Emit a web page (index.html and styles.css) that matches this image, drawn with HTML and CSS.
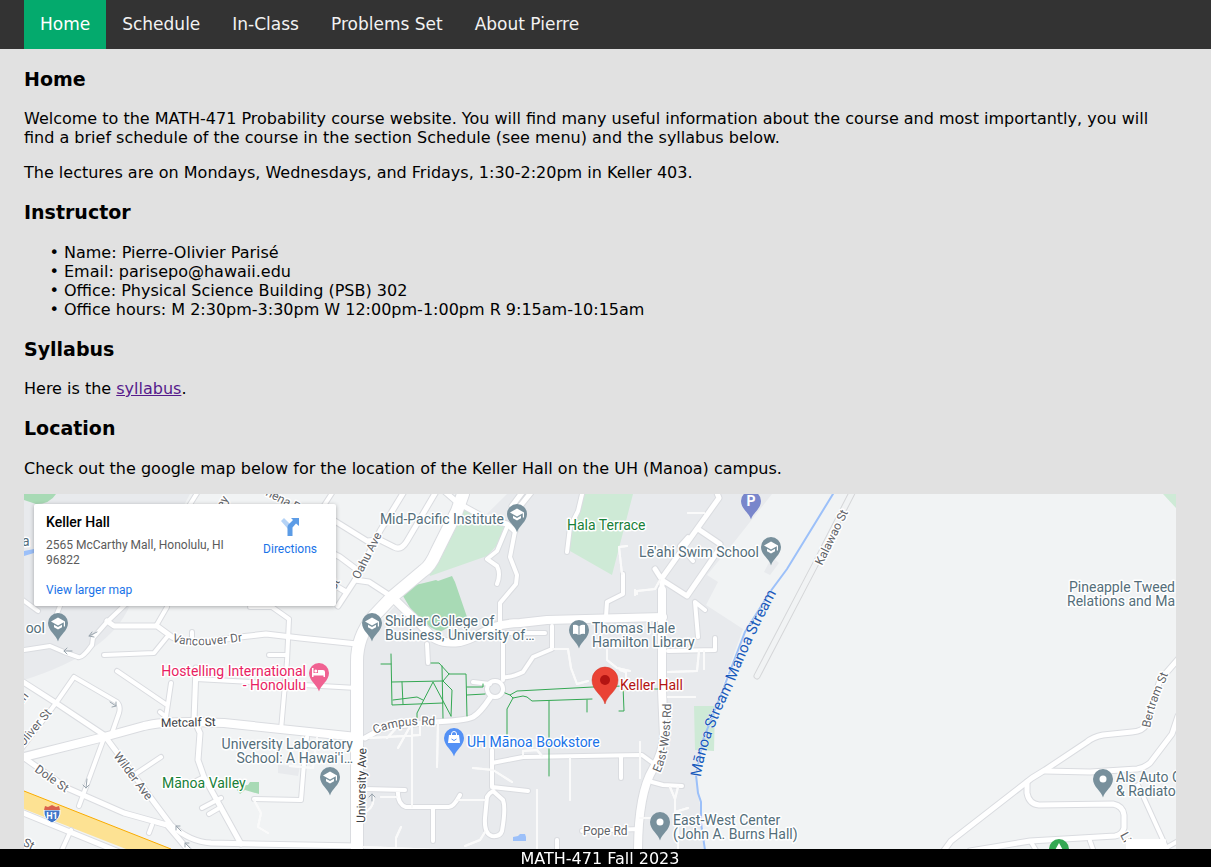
FILE: index.html
```html
<!DOCTYPE html>
<html lang="en">
<head>
<meta charset="utf-8">
<title>MATH-471 Probability</title>
<link rel="stylesheet" href="styles.css">
</head>
<body>
<nav class="menu">
  <a class="active" href="#home">Home</a>
  <a href="#schedule">Schedule</a>
  <a href="#inclass">In-Class</a>
  <a href="#problems">Problems Set</a>
  <a href="#about">About Pierre</a>
</nav>
<main class="page">
  <article class="text">
    <h3>Home</h3>
    <p>Welcome to the MATH-471 Probability course website. You will find many useful information about the course and most importantly, you will find a brief schedule of the course in the section Schedule (see menu) and the syllabus below.</p>
    <p>The lectures are on Mondays, Wednesdays, and Fridays, 1:30-2:20pm in Keller 403.</p>
    <h3>Instructor</h3>
    <ul>
      <li>Name: Pierre-Olivier Parisé</li>
      <li>Email: parisepo@hawaii.edu</li>
      <li>Office: Physical Science Building (PSB) 302</li>
      <li>Office hours: M 2:30pm-3:30pm W 12:00pm-1:00pm R 9:15am-10:15am</li>
    </ul>
    <h3>Syllabus</h3>
    <p>Here is the <a class="visited" href="#syllabus">syllabus</a>.</p>
    <h3>Location</h3>
    <p class="lead">Check out the google map below for the location of the Keller Hall on the UH (Manoa) campus.</p>
  </article>
  <section class="map" aria-label="Map of Keller Hall">
    <svg class="canvas" viewBox="24 494 1152 355" preserveAspectRatio="xMinYMin slice">
      <defs>
        <path id="pin" d="M0 18.500C-1.500 12-10 8-10 0A10 10 0 1 1 10 0C10 8 1.500 12 0 18.500Z"/>
        <g id="cap"><path fill="#fff" d="M-7-1.500L0-5.500 7-1.500V3.500H5.800V-.8L0 2.500Z"/><path fill="#fff" d="M-4 1.700L0 4 4 1.700V4.200L0 6.500-4 4.200Z"/></g>
        <g id="roads">
          <g class="w11"><path d="M463 494L457 511 437 551Q430 567 423 571L392 597 373 617Q357 637 357 661V852"/></g>
          <g class="w8">
            <path d="M392 597L428 632Q436 645 460 642C485 636 484 624 520 623L547 620 663 617"/>
            <path d="M662 590V690L664 737Q662 755 653 769 638 794 638 852"/>
            <path d="M20 758L104 737 144 726Q160 722 190 722L224 723 357 737"/>
          </g>
          <g class="w5">
            <path d="M443 490L458 503 487 519 507 524 515 531"/>
            <path d="M405 490L380 531 357 577 338 606"/>
            <path d="M437 490L407 541Q401 551 394 547L380 540 367 541 330 518"/>
            <path d="M320 547L340 557 360 572M336 586L346 592M355 580L369 582 392 597"/>
            <path d="M533 490L517 510M524 490L512 506"/>
            <path d="M490 698Q480 713 473 717 464 721 430 722L383 728 365 738"/>
            <path d="M715 488L719 498 662 578V600M655 569L662 580 687 596 720 548M698 529L720 544"/>
            <path d="M107 621L114 626 157 626 172 637Q188 645 204 642L240 637 266 634 300 638 357 644"/>
            <path d="M196 668L194 720 200 733 198 760 204 777 241 844"/>
            <path d="M20 680L56 703 104 735 171 825Q190 842 211 843L357 846"/>
            <path d="M20 755L67 788 124 813 167 825 190 852"/>
            <path d="M16 810L124 854"/>
            <path d="M1180 657L1160 680 1146 725Q1143 731 1132 732L1103 735Q1093 737 1087 742L1045 770 1032 778 951 841 940 856"/>
            <path d="M1045 771L1090 772 1137 769Q1144 768 1150 763L1172 734 1178 716"/>
            <path d="M1027 782V793Q1029 804 1039 805L1113 804Q1123 806 1124 815V828Q1122 835 1115 836L1030 841 970 851"/>
          </g>
          <g class="w4">
            <path d="M495 681a8 8 0 1 0 .1 0"/>
            <path d="M507 633H545M515 531L510 557 517 575 516 584 500 603V622M507 527L497 551 487 559 497 566Q501 574 497 584"/>
            <path d="M552 626V649L533 657 523 672Q510 678 503 677M503 640V680M473 682L490 684M427 644L428 663"/>
            <path d="M492 750V787L528 791M492 763L523 757 642 755 653 763M493 791L503 800Q506 808 502 831 500 837 492 836 484 834 485 818L487 797Q489 793 493 791"/>
            <path d="M365 789L405 790M398 790Q397 804 406 807L448 807Q453 808 460 795M433 807V841M621 756V778M557 840V852M582 831L640 829"/>
            <path d="M688 537L680 546 693 561M695 602L698 637M695 602L705 610M715 638V650L668 651M652 782L663 785 682 786"/>
            <path d="M130 600L107 622 93 638 92 645Q82 659 78 657L64 652 50 646 24 650M167 607L156 626M167 637L154 653 104 655M192 632V641"/>
            <path d="M250 607H272L289 619 287 661 281 730M269 655H286M117 671L167 705M171 683L166 717 160 712M196 679L357 688"/>
            <path d="M74 677L56 703 22 748M74 677L117 702Q121 706 119 713L112 733M104 738L79 806M161 757L137 773M149 833L152 825M71 830L61 852"/>
            <path d="M221 798L202 808M221 807L209 814M204 777L194 782M254 799L301 800 304 763 307 737"/>
            <path d="M199 490L189 506M334 490L323 507M20 598L38 611M60 606L56 616M1138 785L1163 840 1168 852M1031 842L1037 852M1090 841L1094 852M1164 849L1180 840M583 490L578 511 570 527 567 552"/>
            <path d="M623 574V594L607 602 606 617"/>
          </g>
          <g class="w2">
            <path d="M627 546L619 547 622 574M553 649H568L571 668 577 684M607 650V660L617 668 630 671M457 800H485M373 797Q375 807 364 813"/>
            <path d="M412 725V807M438 722L437 767M370 738L420 735V722M412 723L398 748M398 726L387 738M473 768L493 770 512 782M523 756V751L537 750 542 756"/>
            <path d="M537 790V852M570 758V800M401 827L396 838V852M485 832L480 840 465 846M363 847L440 850M688 513H704M660 580L655 589 637 591V594"/>
            <path d="M699 651L697 671 668 672M704 651V669M668 697H695M670 787L675 799V812L688 808M678 787L675 799M678 812V852M640 818H652M254 800L261 813 258 827 268 833M317 738L313 768 290 766"/>
            <path d="M381 797H397M577 684L588 681M635 590V595M620 670L626 672V684M640 742V778"/>
          </g>
        </g>
        <path id="vancouver" d="M172 641Q190 650 250 640"/>
        <path id="campus" d="M375 734Q400 722 445 726"/>
        <path id="eastwest" d="M660 773Q671 750 671 702V680"/>
        <path id="stream" d="M701 777Q706 738 734 684 748 645 779 588L785 577"/>
        <path id="bertram" d="M1150 728Q1154 705 1166 680L1172 664"/>
      </defs>
      <rect class="land" x="24" y="494" width="1152" height="355"/>
      <path class="campus" d="M507 494H772L735 541 707 575 718 582 706 605 743 629 723 684 696 765 704 849H357V650L400 600Z"/>
      <path class="campus" d="M24 494H190L130 605Q110 653 24 680ZM764 572L772 557 779 563 770 575ZM278 765L300 766 298 776 278 773Z"/>
      <path class="green" d="M460 506L505 526 499 543 487 556 430 576 427 567 440 545ZM585 494H633L612 575 570 551V537ZM694 706H715L714 751 695 750ZM1163 494H1176V508Z"/>
      <path class="park" d="M403 596Q410 585 424 583L436 580 438 581 452 576 455 582 467 617 440 632 430 627 412 611ZM24 494H56Q50 504 36 504L24 500ZM234 786L240 794 245 790 259 794V782H250L248 785Z"/>
      <path class="water" d="M24 551L34 549V553L24 556ZM513 837L518 836 520 834 525 834 526 837V841H513Z"/>
      <path class="highway" d="M24 791L171 849H126L24 809Z"/>
      <path class="edge" d="M24 791L171 849"/>
      <use class="casing" href="#roads"/>
      <use class="fill" href="#roads"/>
      <path class="lane-edge" d="M856 485L815 565 757 676"/>
      <path class="lane" d="M856 485L815 565 757 676"/>
      <path class="river" d="M833 494L787 569 770 592 745 632 724 687 703 740 696 775 698 793 701 802V823L705 850"/>
      <path class="walk" d="M391 654L392 705 443 703M381 664H391M392 682L443 681M402 682L403 704M393 700L417 697 423 700M417 718V713L433 682 451 716M431 663H439L449 674 466 674 467 716M442 666L443 718M449 674L443 681 452 690 451 716M467 687H483V684M467 695L485 694"/>
      <path class="walk" d="M505 693L510 695 517 691 593 687 623 686 624 711H619M510 695L513 698 523 696 527 697 532 701 592 699M513 698L507 709V745M587 700V712M549 701V776M653 689H658"/>
      <path class="arrow" d="M97 632L89 636M92 632L89 636 94 637M72 651H64M67 648L64 651 67 654M110 702L116 706M116 702V706L112 707M87 779L86 788M83 785L86 788 89 785M181 831L176 826M176 830V826H180M190 848L185 843M185 847V843H189M372 801V794M369 797L372 794 375 797"/>
      <g class="road">
        <text><textPath href="#vancouver">Vancouver Dr</textPath></text>
        <text><textPath href="#campus">Campus Rd</textPath></text>
        <text><textPath href="#eastwest">East-West Rd</textPath></text>
        <text><textPath href="#bertram">Bertram St</textPath></text>
        <text x="583" y="835">Pope Rd</text>
        <text transform="translate(359 580) rotate(-63)">Oahu Ave</text>
        <text transform="translate(822 566) rotate(-64)">Kalawao St</text>
        <text transform="translate(113 756) rotate(53)">Wilder Ave</text>
        <text transform="translate(34 771) rotate(35)">Dole St</text>
        <text transform="translate(52 713) rotate(-50)" text-anchor="end">Oliver St</text>
        <text transform="translate(29 696) rotate(-52)" text-anchor="end">in</text>
        <text transform="translate(229 499) rotate(-58)" text-anchor="end">ey</text>
        <text transform="translate(265 495) rotate(27)">nena P</text>
        <text transform="translate(335 591) rotate(-62)">St</text>
        <text transform="translate(22 845) rotate(28)">St</text>
        <text transform="translate(1120 835) rotate(62)">Li</text>
        <text class="major" transform="translate(161 727) rotate(-1)">Metcalf St</text>
        <text class="major" transform="translate(365 823) rotate(-89)">University Ave</text>
      </g>
      <text class="stream"><textPath href="#stream">Mānoa Stream Manoa Stream</textPath></text>
      <g class="place">
        <text x="504" y="524" text-anchor="end">Mid-Pacific Institute</text>
        <text x="385" y="626">Shidler College of<tspan x="385" dy="14">Business, University of…</tspan></text>
        <text x="592" y="633">Thomas Hale<tspan x="592" dy="14">Hamilton Library</tspan></text>
        <text x="759" y="557" text-anchor="end">Lē'ahi Swim School</text>
        <text x="353" y="749" text-anchor="end">University Laboratory<tspan x="353" dy="14">School: A Hawai'i…</tspan></text>
        <text x="1069" y="592">Pineapple Tweed<tspan x="1067" dy="14">Relations and Ma</tspan></text>
        <text x="1116" y="782">Als Auto C<tspan x="1116" dy="14">&amp; Radiato</tspan></text>
        <text x="673" y="825">East-West Center<tspan x="673" dy="14">(John A. Burns Hall)</tspan></text>
        <text x="45" y="633" text-anchor="end">ool</text>
        <text x="22" y="546">a</text>
        <text class="nature" x="567" y="530">Hala Terrace</text>
        <text class="nature" x="162" y="788">Mānoa Valley</text>
        <text class="hotel" x="306" y="676" text-anchor="end">Hostelling International<tspan x="306" dy="14">- Honolulu</tspan></text>
        <text class="shop" x="467" y="747">UH Mānoa Bookstore</text>
        <text class="target" x="620" y="690">Keller Hall</text>
      </g>
      <g class="pins">
        <g transform="translate(58 623)"><use href="#pin"/><use href="#cap"/></g>
        <g transform="translate(517 514)"><use href="#pin"/><use href="#cap"/></g>
        <g transform="translate(372 623)"><use href="#pin"/><use href="#cap"/></g>
        <g transform="translate(771 547)"><use href="#pin"/><use href="#cap"/></g>
        <g transform="translate(330 777)"><use href="#pin"/><use href="#cap"/></g>
        <g transform="translate(579 630)"><use href="#pin"/><path fill="#fff" d="M-.5-4Q-3-6-6-5V4Q-3 3-.5 5ZM.5-4Q3-6 6-5V4Q3 3 .5 5Z"/></g>
        <g transform="translate(660 822)"><use href="#pin"/><circle r="3.500" fill="#fff"/></g>
        <g transform="translate(1103 779)"><use href="#pin"/><circle r="3.500" fill="#fff"/></g>
        <g transform="translate(751 501)"><use class="parking" href="#pin"/><text class="glyph" y="5" text-anchor="middle">P</text></g>
        <g transform="translate(319 673)"><use class="lodging" href="#pin"/><path fill="#fff" d="M-7-5H-5.500V0H-1V-3H4Q6-3 6-1V4H4.500V2.500H-5.500V4H-7Z"/><circle cx="-3.200" cy="-2" r="1.500" fill="#fff"/></g>
        <g transform="translate(454 738)"><use class="store" href="#pin"/><path fill="#fff" d="M-5-3H5L6 5H-6Z"/><path class="handle" d="M-2.500-2V-4A2.500 2.500 0 0 1 2.500-4V-2"/><path class="smile" d="M-2.500 1Q0 4 2.500 1"/></g>
        <g transform="translate(1059 849)"><circle r="10" fill="#34a853"/><path fill="#fff" d="M0-6L5 3H-5Z"/></g>
        <path fill="#ea4335" stroke="#d33426" stroke-width=".5" d="M605 704C603 695 592 691 592 680A13 13 0 1 1 618 680C618 691 607 695 605 704Z"/><circle cx="605" cy="680" r="5" fill="#b31412"/>
        <path fill="#3f75c8" stroke="#fff" d="M44 810H60Q61 819 52 823 43 819 44 810Z"/><path fill="#d9604d" d="M45 806L48 807 52 805 56 807 59 806 60 810H44Z"/><text class="shield" x="52" y="819" text-anchor="middle">H1</text>
      </g>
      <rect x="1126" y="839" width="40" height="12" rx="1" fill="#fff"/>
    </svg>
    <div class="card">
      <div class="info">
        <strong>Keller Hall</strong>
        <address>2565 McCarthy Mall, Honolulu, HI 96822</address>
        <a href="#larger">View larger map</a>
      </div>
      <a class="directions" href="#directions">
        <svg viewBox="0 0 20 20" width="20" height="20"><path d="M1 4L4 1 11 8 8 12Z" fill="#b5d3f6"/><path d="M11 1H19V9L16 6.500 12.500 10.500V19H7.500V10Q7.500 8.500 8.500 7.500L13 3Z" fill="#5c9ce6"/></svg>
        Directions
      </a>
    </div>
  </section>
</main>
<footer class="footer">MATH-471 Fall 2023</footer>
</body>
</html>
```
FILE: styles.css
```css
body {
  margin: 0;
  min-height: 100vh;
  display: flex;
  flex-direction: column;
  background: #e1e1e1;
  color: #000;
  font-family: "DejaVu Sans", sans-serif;
  font-size: 16px;
}
.menu {
  display: flex;
  flex-wrap: wrap;
  padding: 0 24px;
  background: #333;
}
.menu a {
  padding: 14px 16px;
  color: #f2f2f2;
  font-size: 17px;
  line-height: 21px;
  text-decoration: none;
}
.menu .active {
  background: #04aa6d;
  color: #fff;
}
.page {
  flex: 1;
  display: flex;
  flex-direction: column;
  padding: 0 35px 0 24px;
}
.text { display: flow-root; }
.text h3 {
  margin: 19px 0;
  font-size: 19px;
  line-height: 22px;
}
.text ul {
  margin-top: 20px;
  list-style-type: "• ";
}
.text .lead { margin-top: 20px; }
.visited { color: #551a8b; }

.map {
  position: relative;
  flex: 1 0 355px;
  overflow: hidden;
  font-family: Roboto, sans-serif;
}
.canvas {
  position: absolute;
  inset: 0;
  width: 100%;
  height: 100%;
}
.land { fill: #f1f3f4; }
.campus { fill: #e8eaed; }
.green { fill: #ceead6; }
.park { fill: #a8dab5; }
.water { fill: #9cc0f9; }
.highway { fill: #fde293; }
.edge { stroke: #f9ab00; stroke-width: 1px; }
.casing, .fill {
  fill: none;
  stroke-linecap: round;
  stroke-linejoin: round;
}
.casing { stroke: #dadce0; --case: 2px; }
.fill { stroke: #fff; --case: 0px; }
.w11 { stroke-width: calc(12px + var(--case)); }
.w8 { stroke-width: calc(8px + var(--case)); }
.w5 { stroke-width: calc(5px + var(--case)); }
.w4 { stroke-width: calc(4px + var(--case)); }
.w2 { stroke-width: 2px; stroke: #fafafa; }
.lane-edge, .lane, .river, .walk, .arrow { fill: none; stroke-linecap: round; }
.lane-edge { stroke: #d5d6d8; stroke-width: 7px; }
.lane { stroke: #f1f3f4; stroke-width: 5px; }
.river { stroke: #9cc0f9; stroke-width: 2px; }
.walk { stroke: #34a853; stroke-width: 1px; }
.arrow { stroke: #9aa5ae; stroke-width: 1px; }
.road text, .place text, .stream {
  paint-order: stroke;
  stroke: #fff;
  stroke-width: 3px;
  stroke-linejoin: round;
}
.road text { fill: #5f6368; font-size: 12px; }
.road .major { fill: #3c4043; }
.place text { fill: #546e7a; font-size: 14px; }
.place .nature { fill: #188038; }
.place .hotel { fill: #e91e63; }
.place .shop { fill: #1a73e8; }
.place .target { fill: #b31412; }
.stream { fill: #185abc; font-size: 15px; stroke: #f1f3f4; stroke-width: 1px; }
.pins { fill: #78909c; }
.pins .parking { fill: #7986cb; }
.pins .lodging { fill: #f06292; }
.pins .store { fill: #5491f5; }
.glyph { fill: #fff; font-size: 14px; font-weight: 700; }
.shield { fill: #fff; font-size: 9px; font-weight: 700; }
.handle { fill: none; stroke: #fff; stroke-width: 1px; }
.smile { fill: none; stroke: #5491f5; stroke-width: 1px; }

.card {
  position: absolute;
  top: 10px;
  left: 10px;
  box-sizing: border-box;
  display: flex;
  justify-content: space-between;
  width: 302px;
  padding: 9px 19px 8px 12px;
  background: #fff;
  border-radius: 2px;
  box-shadow: 0 1px 4px rgba(0, 0, 0, .3);
  font-size: 12px;
  line-height: 15px;
}
.info { width: 190px; }
.card strong {
  display: block;
  font-size: 14px;
  font-weight: 500;
  line-height: 18px;
}
.card address {
  margin: 7px 0 15px;
  color: #5b5b5b;
  font-style: normal;
}
.card a { color: #1a73e8; text-decoration: none; }
.directions {
  display: flex;
  flex-direction: column;
  align-items: center;
  gap: 5px;
  padding-top: 4px;
}
.footer {
  position: sticky;
  bottom: 0;
  padding: 1px 11px 0 0;
  background: #000;
  color: #fff;
  line-height: 17px;
  text-align: center;
}
```
